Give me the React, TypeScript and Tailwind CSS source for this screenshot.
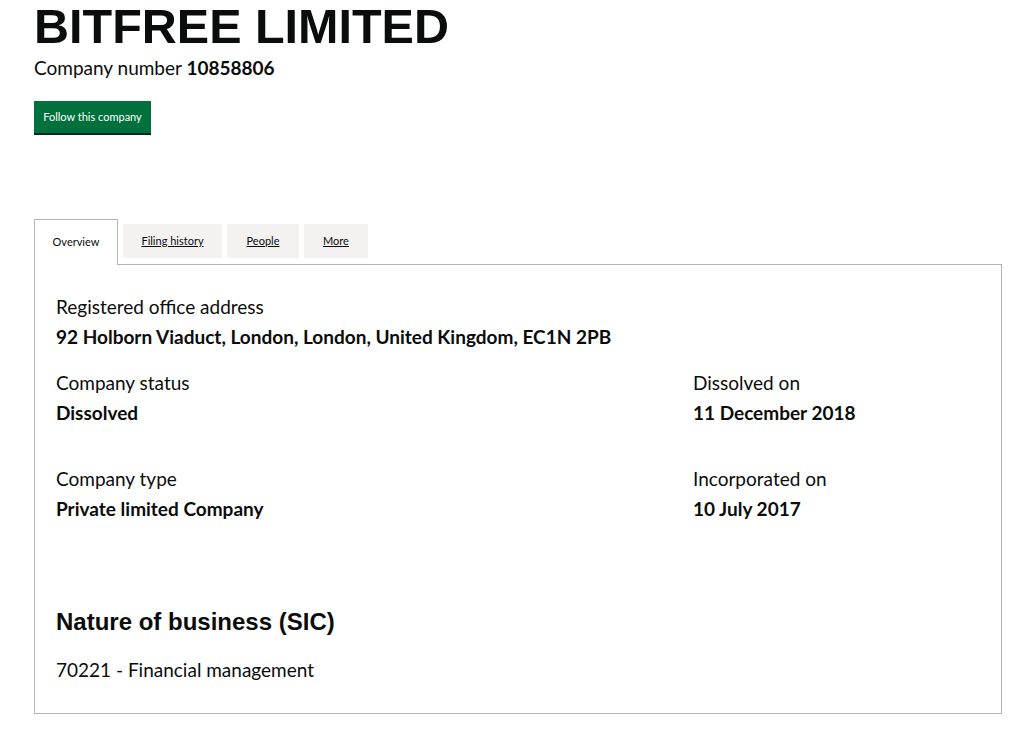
import React from 'react';

const sans = { fontFamily: 'Lato, "Noto Sans", sans-serif' };

const Field = ({ label, value }: { label: string; value: string }) => (
  <div>
    <div className="text-[19px] leading-[30px] text-[#0b0c0c]">{label}</div>
    <div className="text-[19px] leading-[30px] font-bold text-[#0b0c0c]">{value}</div>
  </div>
);

const App = () => {
  return (
    <div className="min-h-[729px] bg-white px-[34px] text-[#0b0c0c]" style={sans}>
      <h1
        className="pt-[3px] text-[48.5px] leading-[46px] font-bold"
        style={{ fontFamily: '"Liberation Sans", Arial, sans-serif' }}
      >
        BITFREE LIMITED
      </h1>
      <p className="mt-[6px] text-[19px] leading-[26px]">
        Company number <span className="font-bold">10858806</span>
      </p>
      <button className="mt-[20px] h-[32px] w-[117px] bg-[#00703c] text-[11px] text-white shadow-[0_2px_0_#002d18]">
        Follow this company
      </button>

      <div className="mt-[86px] flex items-start gap-[5px]">
        <div className="relative z-10 -mb-px flex h-[46px] w-[84px] items-center justify-center border border-b-0 border-[#b1b4b6] bg-white pb-[1px] text-[11px]">
          Overview
        </div>
        {[
          ['Filing history', 'w-[99px]'],
          ['People', 'w-[72px]'],
          ['More', 'w-[64px]'],
        ].map(([t, w]) => (
          <a
            key={t}
            href="#"
            className={`mt-[5px] flex h-[34px] items-center justify-center bg-[#f3f2f1] text-[11px] text-[#0b0c0c] underline ${w}`}
          >
            {t}
          </a>
        ))}
      </div>

      <div className="w-[968px] border border-[#b1b4b6] px-[21px] pt-[27px] pb-[28px]">
        <Field label="Registered office address" value="92 Holborn Viaduct, London, London, United Kingdom, EC1N 2PB" />
        <div className="mt-[16px] flex">
          <div className="w-[637px]">
            <Field label="Company status" value="Dissolved" />
            <div className="mt-[36px]">
              <Field label="Company type" value="Private limited Company" />
            </div>
          </div>
          <div>
            <Field label="Dissolved on" value="11 December 2018" />
            <div className="mt-[36px]">
              <Field label="Incorporated on" value="10 July 2017" />
            </div>
          </div>
        </div>
        <h2
          className="mt-[83px] text-[24px] leading-[30px] font-bold"
          style={{ fontFamily: '"Liberation Sans", Arial, sans-serif' }}
        >
          Nature of business (SIC)
        </h2>
        <p className="mt-[18px] text-[19px] leading-[30px]">70221 - Financial management</p>
      </div>
    </div>
  );
};

export default App;
